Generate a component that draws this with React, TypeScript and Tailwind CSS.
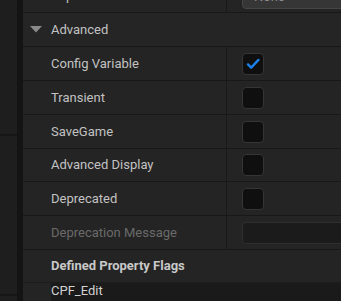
import type { ReactNode } from 'react';

const labelText = 'text-[13px] text-[#c2c2c2]';

function CheckBox({ checked = false }: { checked?: boolean }) {
  return (
    <div className="flex h-[22px] w-[22px] items-center justify-center rounded-[4px] border border-[#353535] bg-[#0f0f0f]">
      {checked && (
        <svg width="22" height="22" viewBox="0 0 22 22" fill="none">
          <path d="M5.5 11.5 L9 15 L17 6.5" stroke="#1b80ea" strokeWidth="2.6" strokeLinecap="round" strokeLinejoin="round" />
        </svg>
      )}
    </div>
  );
}

// h includes the 1px bottom border (border-box)
function PropRow({ label, dim = false, h = 'h-[34px]', children }: { label: string; dim?: boolean; h?: string; children?: ReactNode }) {
  return (
    <div className={`flex ${h} shrink-0 border-b border-[#181818]`}>
      <div className="flex w-[204px] shrink-0 items-center border-r border-[#181818] pl-[28px]">
        <span className={dim ? 'text-[13px] text-[#6a6a6a]' : labelText}>{label}</span>
      </div>
      <div className="flex flex-1 items-center pl-[15px]">{children}</div>
    </div>
  );
}

export default function App() {
  return (
    <div className="flex h-[301px] w-[341px] overflow-hidden bg-[#242424] font-['Roboto',sans-serif]">
      {/* left graph strip */}
      <div className="flex w-[17px] shrink-0 flex-col bg-[#1e1e1e]">
        <div className="h-[134px] shrink-0" />
        <div className="h-[2px] shrink-0 bg-[#161616]" />
        <div className="h-[158px] shrink-0" />
        <div className="h-[2px] shrink-0 bg-[#161616]" />
      </div>
      <div className="w-[6px] shrink-0 bg-[#141414]" />

      <div className="flex min-w-0 flex-1 flex-col mt-[-21px]">
        {/* cut-off row above */}
        <div className="flex h-[34px] shrink-0 border-b border-[#181818]">
          <div className="flex w-[204px] shrink-0 items-center border-r border-[#181818] pl-[28px]">
            <span className={labelText}>Replication Condition</span>
          </div>
          <div className="flex flex-1 items-start pl-[15px] pt-[6px]">
            <div className="flex h-[24px] w-[120px] shrink-0 items-center rounded-[4px] border border-[#464646] bg-[#363636] pl-[11px] text-[13px] text-[#8c8c8c]">
              None
            </div>
          </div>
        </div>

        {/* Advanced header */}
        <div className="flex h-[34px] shrink-0 items-center border-b border-[#181818] bg-[#252525]">
          <svg className="ml-[7px]" width="12" height="7" viewBox="0 0 12 7">
            <path d="M0 0 H12 L6 6.5 Z" fill="#8a8a8a" />
          </svg>
          <span className={`ml-[9px] ${labelText}`}>Advanced</span>
        </div>

        <PropRow label="Config Variable">
          <CheckBox checked />
        </PropRow>
        <PropRow label="Transient">
          <CheckBox />
        </PropRow>
        <PropRow label="SaveGame">
          <CheckBox />
        </PropRow>
        <PropRow label="Advanced Display" h="h-[33px]">
          <CheckBox />
        </PropRow>
        <PropRow label="Deprecated">
          <CheckBox />
        </PropRow>
        <PropRow label="Deprecation Message" dim>
          <div className="h-[22px] w-[120px] shrink-0 rounded-[4px] border border-[#2f2f2f] bg-[#1b1b1b]" />
        </PropRow>

        {/* Defined Property Flags */}
        <div className="flex h-[33px] shrink-0 items-center border-b border-[#1c1c1c] pl-[28px]">
          <span className="text-[13px] font-bold text-[#c8c8c8]">Defined Property Flags</span>
        </div>
        <div className="flex flex-1 pl-[28px]">
          <div className="flex-1 bg-[#1a1a1a] text-[13px] leading-[16px] text-[#d2d2d2]">CPF_Edit</div>
        </div>
      </div>
    </div>
  );
}
